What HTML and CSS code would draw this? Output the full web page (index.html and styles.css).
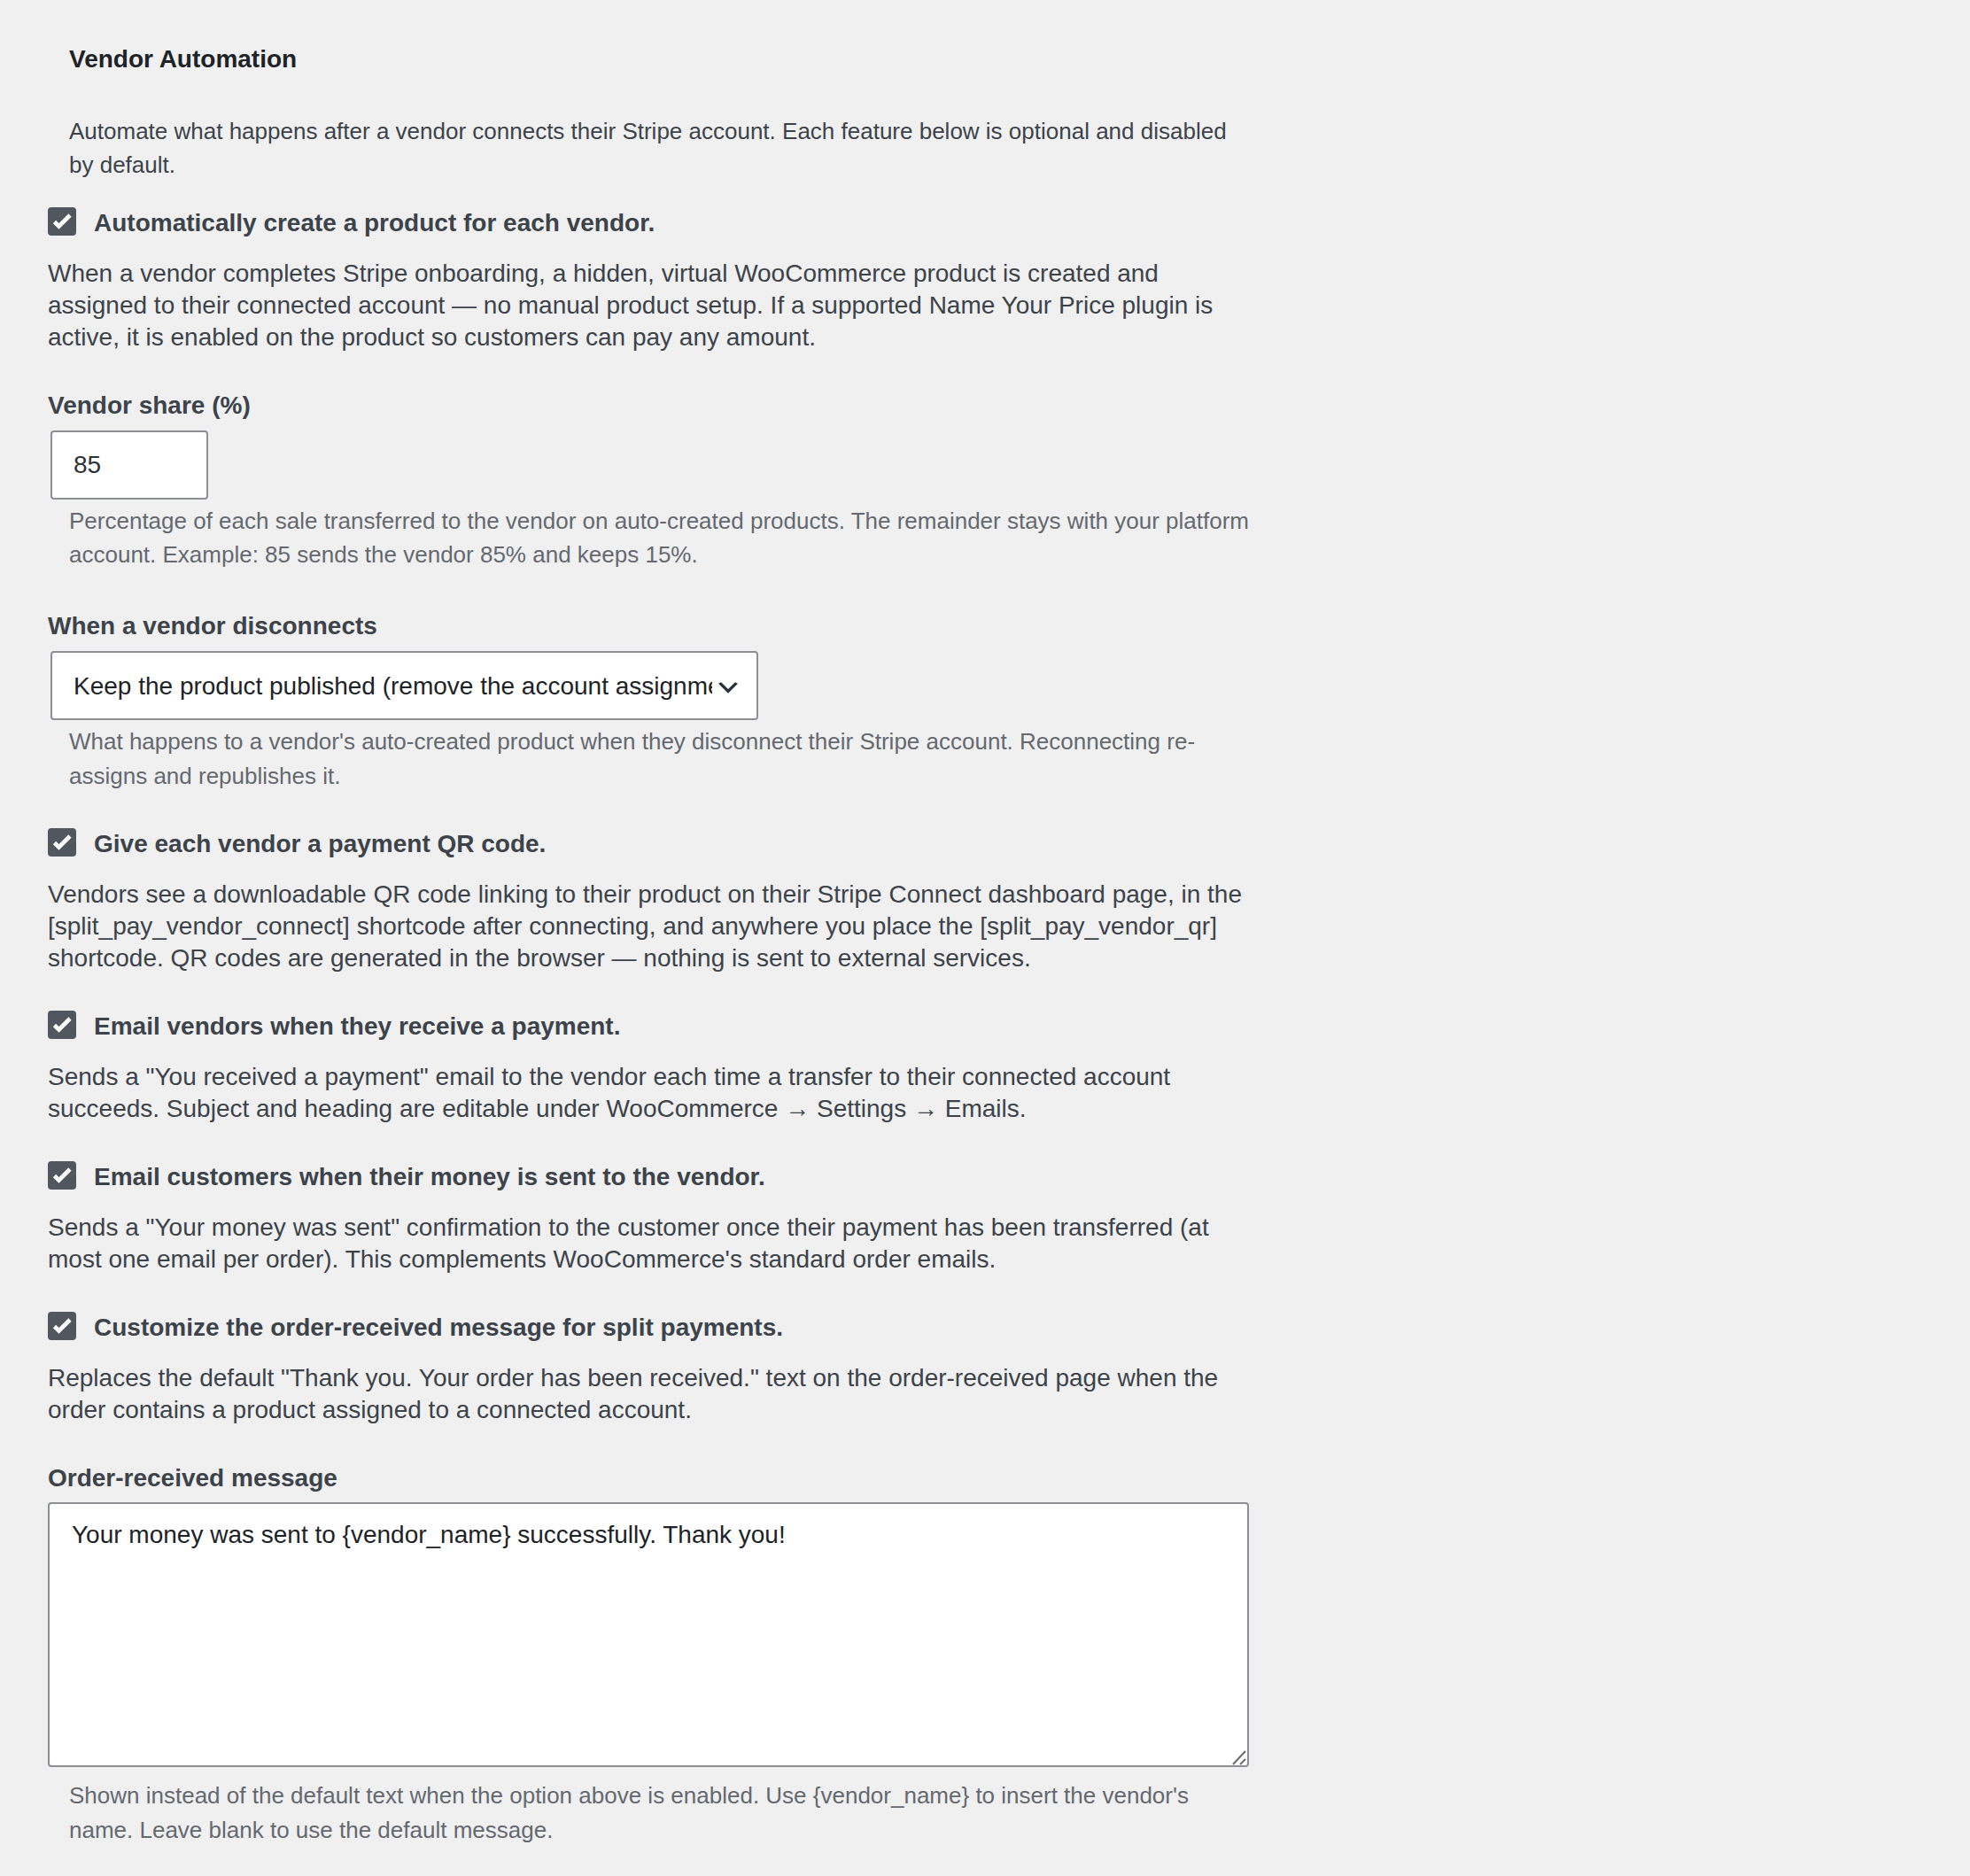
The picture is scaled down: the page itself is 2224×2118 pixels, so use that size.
FILE: index.html
```html
<!DOCTYPE html>
<html lang="en">
<head>
<meta charset="utf-8">
<title>Vendor Automation</title>
<link rel="stylesheet" href="styles.css">
</head>
<body>
<main class="settings">
  <h2 class="section-title">Vendor Automation</h2>
  <p class="intro">Automate what happens after a vendor connects their Stripe account. Each feature below is optional and disabled by default.</p>

  <section class="option">
    <label class="toggle">
      <span class="check" aria-hidden="true"><svg viewBox="0 0 32 32" width="32" height="32"><rect width="32" height="32" rx="4" fill="#50575e"/><polyline points="7.5,16.5 12.5,21.5 25,9" fill="none" stroke="#fff" stroke-width="4.6"/></svg></span>
      <span class="toggle-text">Automatically create a product for each vendor.</span>
    </label>
    <p class="help">When a vendor completes Stripe onboarding, a hidden, virtual WooCommerce product is created and assigned to their connected account — no manual product setup. If a supported Name Your Price plugin is active, it is enabled on the product so customers can pay any amount.</p>
  </section>

  <div class="field field-share">
    <label class="field-label" for="vendor-share">Vendor share (%)</label>
    <input id="vendor-share" class="text-input" type="text" value="85">
    <p class="desc">Percentage of each sale transferred to the vendor on auto-created products. The remainder stays with your platform account. Example: 85 sends the vendor 85% and keeps 15%.</p>
  </div>

  <div class="field field-disconnect">
    <label class="field-label" for="disconnect">When a vendor disconnects</label>
    <div class="select-wrap">
      <select id="disconnect" class="select">
        <option>Keep the product published (remove the account assignment)</option>
      </select>
      <svg class="chevron" viewBox="3 6 14 8" width="22" height="13" aria-hidden="true"><path d="M5 6l5 5 5-5 2 1-7 7-7-7 2-1z" fill="#2c3338"/></svg>
    </div>
    <p class="desc desc-loose">What happens to a vendor's auto-created product when they disconnect their Stripe account. Reconnecting re-assigns and republishes it.</p>
  </div>

  <section class="option">
    <label class="toggle">
      <span class="check" aria-hidden="true"><svg viewBox="0 0 32 32" width="32" height="32"><rect width="32" height="32" rx="4" fill="#50575e"/><polyline points="7.5,16.5 12.5,21.5 25,9" fill="none" stroke="#fff" stroke-width="4.6"/></svg></span>
      <span class="toggle-text">Give each vendor a payment QR code.</span>
    </label>
    <p class="help">Vendors see a downloadable QR code linking to their product on their Stripe Connect dashboard page, in the [split_pay_vendor_connect] shortcode after connecting, and anywhere you place the [split_pay_vendor_qr] shortcode. QR codes are generated in the browser — nothing is sent to external services.</p>
  </section>

  <section class="option">
    <label class="toggle">
      <span class="check" aria-hidden="true"><svg viewBox="0 0 32 32" width="32" height="32"><rect width="32" height="32" rx="4" fill="#50575e"/><polyline points="7.5,16.5 12.5,21.5 25,9" fill="none" stroke="#fff" stroke-width="4.6"/></svg></span>
      <span class="toggle-text">Email vendors when they receive a payment.</span>
    </label>
    <p class="help">Sends a "You received a payment" email to the vendor each time a transfer to their connected account succeeds. Subject and heading are editable under WooCommerce → Settings → Emails.</p>
  </section>

  <section class="option">
    <label class="toggle">
      <span class="check" aria-hidden="true"><svg viewBox="0 0 32 32" width="32" height="32"><rect width="32" height="32" rx="4" fill="#50575e"/><polyline points="7.5,16.5 12.5,21.5 25,9" fill="none" stroke="#fff" stroke-width="4.6"/></svg></span>
      <span class="toggle-text">Email customers when their money is sent to the vendor.</span>
    </label>
    <p class="help">Sends a "Your money was sent" confirmation to the customer once their payment has been transferred (at most one email per order). This complements WooCommerce's standard order emails.</p>
  </section>

  <section class="option">
    <label class="toggle">
      <span class="check" aria-hidden="true"><svg viewBox="0 0 32 32" width="32" height="32"><rect width="32" height="32" rx="4" fill="#50575e"/><polyline points="7.5,16.5 12.5,21.5 25,9" fill="none" stroke="#fff" stroke-width="4.6"/></svg></span>
      <span class="toggle-text">Customize the order-received message for split payments.</span>
    </label>
    <p class="help">Replaces the default "Thank you. Your order has been received." text on the order-received page when the order contains a product assigned to a connected account.</p>
  </section>

  <div class="field field-message">
    <label class="field-label" for="order-message">Order-received message</label>
    <div class="textarea-wrap">
      <textarea id="order-message" class="textarea">Your money was sent to {vendor_name} successfully. Thank you!</textarea>
      <svg class="grip" viewBox="0 0 18 18" width="18" height="18" aria-hidden="true"><path d="M2 17L16 2M10 17L16 11" stroke="#6b6b6b" stroke-width="2" fill="none"/></svg>
    </div>
    <p class="desc desc-last">Shown instead of the default text when the option above is enabled. Use {vendor_name} to insert the vendor's name. Leave blank to use the default message.</p>
  </div>
</main>
</body>
</html>
```

FILE: styles.css
```css
* {
  box-sizing: border-box;
}

html,
body {
  margin: 0;
  padding: 0;
  background: #f0f0f1;
}

body {
  font-family: "Liberation Sans", Arial, sans-serif;
  color: #3c434a;
}

.settings {
  width: 1414px;
  padding: 49px 0 40px 54px;
}

.section-title {
  margin: 0;
  padding-left: 24px;
  font-size: 28px;
  line-height: 36px;
  font-weight: 700;
  color: #1d2327;
}

.intro {
  margin: 44px 0 0;
  padding-left: 24px;
  font-size: 26px;
  line-height: 38px;
  color: #3c434a;
}

.option {
  margin-top: 41px;
}

.intro + .option {
  margin-top: 29px;
}

.field + .option {
  margin-top: 39px;
}

.toggle {
  display: flex;
  align-items: flex-start;
  gap: 20px;
  height: 36px;
  font-size: 28px;
  line-height: 36px;
  font-weight: 700;
  color: #3c434a;
}

.check {
  display: block;
  width: 32px;
  height: 32px;
  flex: none;
}

.check svg {
  display: block;
}

.help {
  margin: 21px 0 0;
  font-size: 28px;
  line-height: 36px;
  color: #3c434a;
}

.field {
  margin-top: 41px;
}

.field + .field {
  margin-top: 44px;
}

.option + .field {
  margin-top: 41px;
}

.field-label {
  display: block;
  font-size: 28px;
  line-height: 36px;
  font-weight: 700;
  color: #3c434a;
}

.text-input {
  display: block;
  margin: 10px 0 0 3px;
  width: 178px;
  height: 78px;
  padding: 0 24px;
  border: 2px solid #8c8f94;
  border-radius: 4px;
  background: #fff;
  font-family: "Liberation Sans", Arial, sans-serif;
  font-size: 28px;
  color: #2c3338;
  outline: none;
}

.select-wrap {
  position: relative;
  width: 799px;
  margin: 10px 0 0 3px;
}

.select {
  display: block;
  -webkit-appearance: none;
  appearance: none;
  width: 799px;
  height: 78px;
  padding: 0 50px 0 24px;
  border: 2px solid #8c8f94;
  border-radius: 4px;
  background: #fff;
  font-family: "Liberation Sans", Arial, sans-serif;
  font-size: 28px;
  color: #1d2327;
  outline: none;
}

.chevron {
  position: absolute;
  left: 754px;
  top: 35px;
  pointer-events: none;
}

.desc {
  margin: 5px 0 0;
  padding-left: 24px;
  font-size: 26px;
  line-height: 38px;
  color: #646970;
}

.desc-loose {
  line-height: 39px;
}

.textarea-wrap {
  position: relative;
  width: 1356px;
  margin-top: 9px;
}

.textarea {
  display: block;
  width: 1356px;
  height: 299px;
  padding: 17px 25px;
  border: 2px solid #8c8f94;
  border-radius: 4px;
  background: #fff;
  font-family: "Liberation Sans", Arial, sans-serif;
  font-size: 28px;
  line-height: 36.4px;
  color: #1d2327;
  resize: none;
  outline: none;
}

.grip {
  position: absolute;
  right: 2px;
  bottom: 2px;
  pointer-events: none;
}

.desc-last {
  margin-top: 13px;
  line-height: 39px;
}
```
